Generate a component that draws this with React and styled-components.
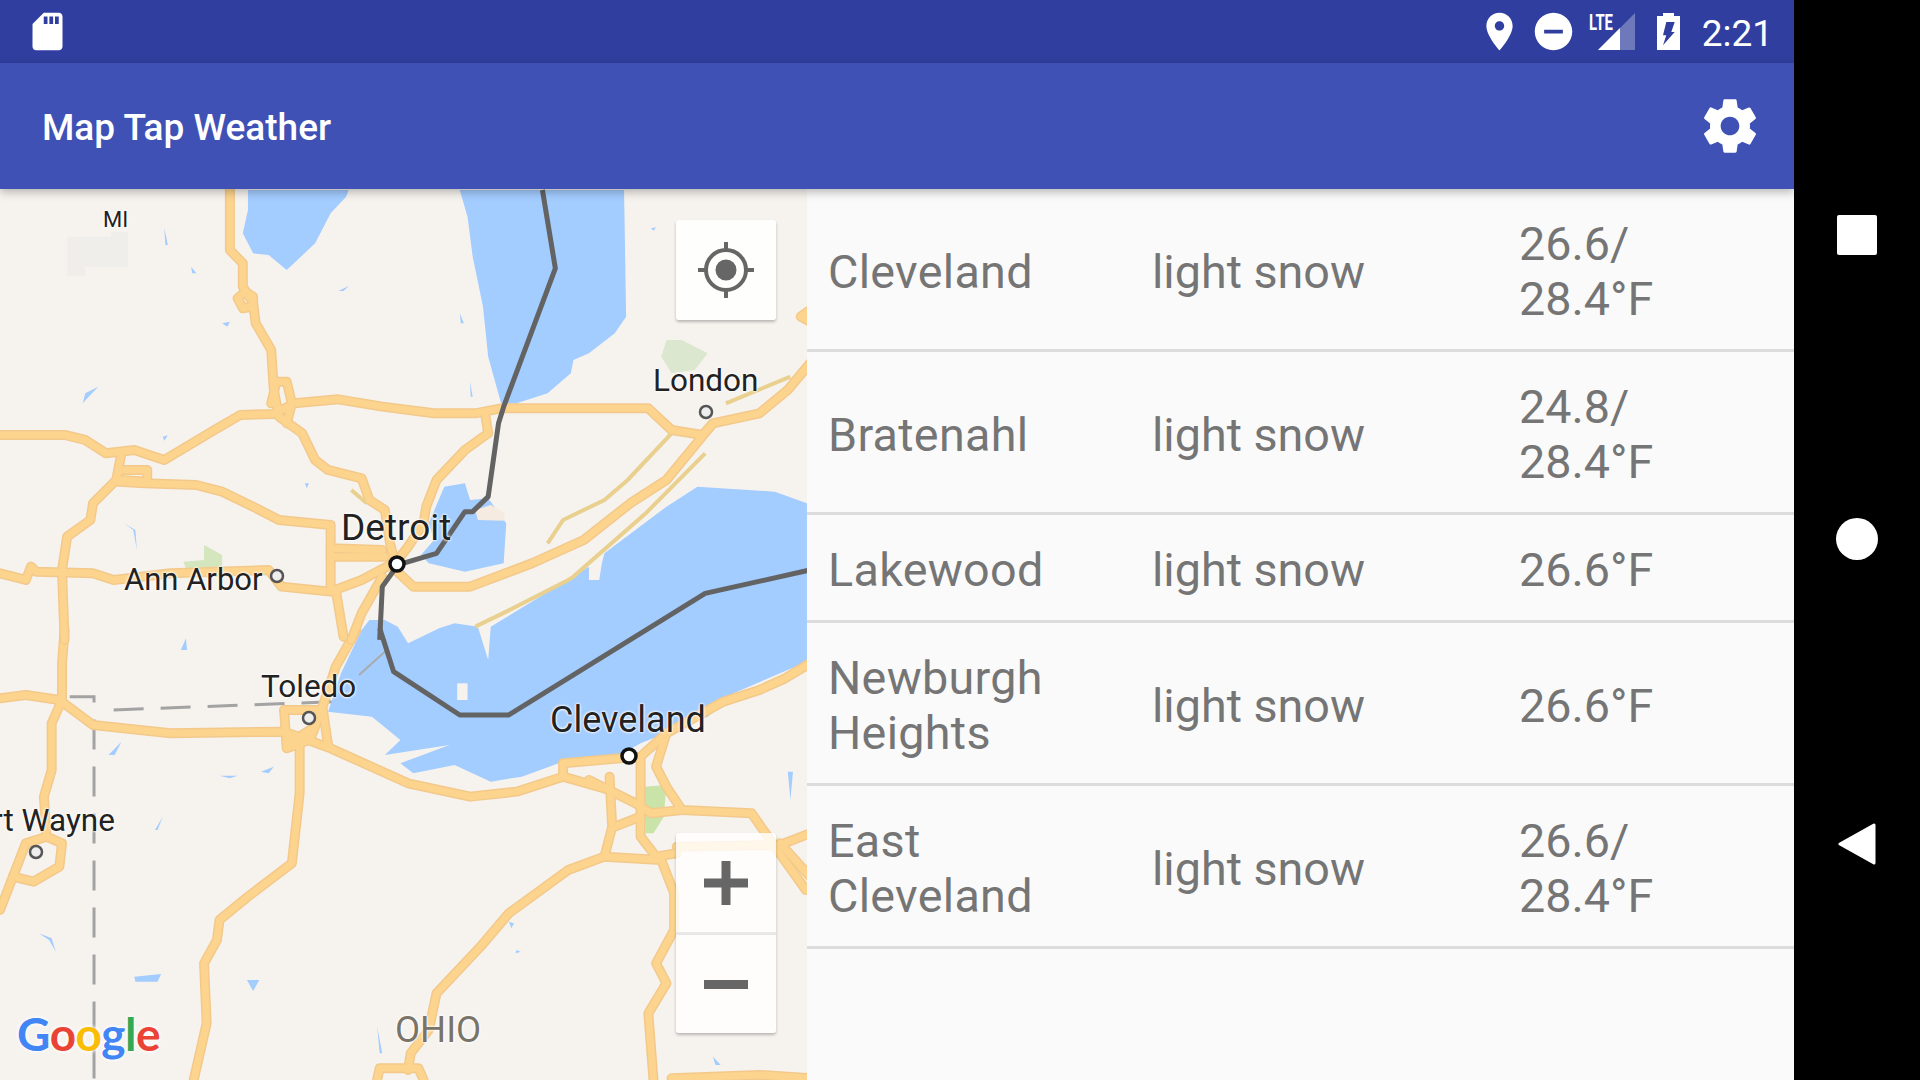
import React from 'react';
import styled, { createGlobalStyle } from 'styled-components';

const GlobalStyle = createGlobalStyle`
  html, body {
    margin: 0;
    padding: 0;
    background: #000;
    overflow: hidden;
  }
  body {
    font-family: Roboto, "Liberation Sans", sans-serif;
  }
`;

// map data, in the coordinates of the two halves of the map (top, bottom)
const TOP_TRANSFORM = 'translate(0 190) scale(.5166 .3333)';
const BOTTOM_TRANSFORM = 'translate(0 630) scale(.5166 .3333)';

const TOP_WATER = [
  'M480,0 L675,0 670,20 640,70 610,160 555,240 520,195 490,190 470,130 480,60Z',
  'M890,0 L1208,0 1212,380 1190,430 1140,490 1110,510 1105,550 1060,610 1000,640 970,640 945,500 935,350 915,200 905,80Z',
  'M860,890 L900,880 910,930 945,925 980,1000 975,1120 900,1145 830,1120 815,1095 840,1050 830,1000Z',
  'M430,400 445,395 440,410Z',
  'M655,303 675,288 665,303Z',
  'M160,640 190,590 165,610Z',
  'M318,115 325,165 320,165Z',
  'M370,230 380,250 372,250Z',
  'M1260,115 1270,112 1265,122Z',
  'M890,370 898,400 892,400Z',
  'M910,575 915,620 911,620Z',
  'M590,880 598,880 594,895Z',
  'M240,1000 262,1020 265,1080 258,1020Z',
  'M315,740 325,736 318,752Z',
];

const BOTTOM_WATER = [
  'M1562,-380 L1500,-415 1350,-430 1290,-370 1170,-230 1165,-200 1160,-150 1140,-150 1140,-190 950,-10 945,90 925,-10 880,-20 850,-5 790,40 770,-10 745,-30 715,-30 700,0 660,130 635,245 720,260 775,330 745,375 870,345 775,400 800,430 880,405 950,455 1010,440 1090,395 1200,375 1240,340 1370,260 1420,190 1562,95Z',
  'M210,375 235,335 222,375Z',
  'M260,1040 312,1032 305,1055 262,1055Z',
  'M478,1050 502,1050 490,1083Z',
  'M425,437 460,437 445,445Z',
  'M350,60 360,25 362,60Z',
  'M300,600 315,560 305,600Z',
  'M1525,425 1535,425 1530,510Z',
  'M985,875 995,880 990,895Z',
  'M1000,960 1008,965 998,970Z',
  'M75,910 100,925 108,965 95,930Z',
  'M505,425 530,410 520,430Z',
  'M1380,1280 1395,1305 1385,1305Z',
  'M730,1190 740,1270 735,1270Z',
];

const TOP_ROADS = [
  'M445,0 L445,180 470,220 470,290 490,340 495,400 525,480 530,600 540,680 585,730 610,810 635,840 700,865 715,930 745,960 755,1060 765,1120',
  'M475,305 L460,325 470,355 490,350 490,320 475,305',
  'M0,735 L125,735 165,750 205,790 260,780 318,810 415,720 465,675 530,672 570,640 655,628 740,650 840,670 920,670 970,655 1255,655 1300,720 1360,735 1380,700 1470,670 1525,600 1568,520',
  'M525,640 L535,575 555,575 565,640 555,700',
  'M940,680 L945,730 900,780 845,870 825,950 820,1000 790,1070 765,1120',
  'M235,790 L225,870 180,940 175,990 130,1040 120,1140 125,1350',
  'M230,875 L280,880 380,885 430,905 490,950 540,990 640,1005 640,1190',
  'M235,840 L285,840 285,875 235,870',
  'M640,1075 L740,1080',
  'M640,1100 L745,1100',
  'M0,1150 L50,1170 60,1130 70,1145 180,1150 220,1170 330,1150 520,1140 545,1190 640,1205 700,1170 755,1125 800,1190 910,1190 1030,1120 1130,1050 1220,940 1290,870 1375,710',
  'M650,1200 L665,1340',
  'M740,1160 L700,1270 680,1350',
  'M1568,360 L1550,380 1568,395',
];

const BOTTOM_ROADS = [
  'M125,0 L120,100 120,210 100,280 100,420 85,500 90,620',
  'M90,620 L50,640 25,740 65,755 115,710 120,640 90,620',
  'M25,740 L0,840',
  'M0,205 L50,195 115,210 180,285 330,310 550,305 640,355 790,460 910,500 1000,485 1090,440',
  'M550,240 L625,240 635,345',
  'M550,240 L555,355 590,335',
  'M600,300 L560,340',
  'M690,0 L650,110 620,250 600,330',
  'M580,340 L580,490 565,700 480,800 425,870 420,930 395,1000 400,1180 375,1350',
  'M1090,440 L1090,400 1200,385 1240,380 1290,310 1400,215 1470,180 1520,145 1568,100',
  'M1090,440 L1180,480',
  'M1290,310 L1270,410 1290,470 1320,540 1455,550 1500,650 1560,780',
  'M1180,440 L1185,590 1170,680',
  'M1240,390 L1240,620 1270,680 1310,670',
  'M1140,450 L1230,520 1260,550 1320,540',
  'M1190,590 L1240,560',
  'M1170,680 L1100,720 985,850 930,950 845,1090 830,1200 795,1270 790,1320',
  'M1170,680 L1280,690 1305,790 1305,900 1270,1000 1290,1060 1255,1150 1265,1350',
  'M730,1350 L735,1315 810,1315 820,1350',
  'M1310,650 L1510,645 1568,610',
  'M1510,640 L1568,740',
  'M1300,1345 L1470,1335 1568,1345',
];

const TOP_MINOR = [
  'M1300,730 L1215,870 1170,930 1090,990 1060,1060',
  'M1365,790 L1250,970 1110,1160 1100,1170 980,1265 920,1310',
  'M1405,640 L1530,560',
  'M680,900 L710,940',
];

const LABELS = [
  { text: 'MI', x: 103, y: 20, size: 22 },
  { text: 'London', x: 653, y: 176, size: 31.5 },
  { text: 'Detroit', x: 341, y: 320, size: 37 },
  { text: 'Ann Arbor', x: 124, y: 375, size: 31 },
  { text: 'Toledo', x: 261, y: 482, size: 31.5 },
  { text: 'Cleveland', x: 550, y: 513, size: 36 },
  { text: 'Fort Wayne', x: -43, y: 616, size: 31.5 },
  { text: 'OHIO', x: 395, y: 823, size: 36.5, region: true },
];

const CITIES = [
  { name: 'Cleveland', description: 'light snow', temp: ['26.6/', '28.4°F'] },
  { name: 'Bratenahl', description: 'light snow', temp: ['24.8/', '28.4°F'] },
  { name: 'Lakewood', description: 'light snow', temp: ['26.6°F'], short: true },
  { name: 'Newburgh Heights', description: 'light snow', temp: ['26.6°F'] },
  { name: 'East Cleveland', description: 'light snow', temp: ['26.6/', '28.4°F'] },
];

const MapDrawing = () => (
  <MapSvg viewBox="0 189 807 891">
    <g transform={TOP_TRANSFORM}>
      {TOP_WATER.map((d) => <Water key={d} d={d} />)}
      <path d="M130,140 L215,140 215,125 248,125 248,230 165,230 165,258 130,258Z" fill="#f0eeeb" />
      <path d="M1290,450 L1320,450 1370,490 1345,540 1300,550 1280,500Z" fill="#dbe8cf" />
      <path d="M355,1115 L395,1110 395,1065 430,1095 430,1135 360,1135Z" fill="#d3e6bd" />
      <path d="M920,960 L950,945 978,970 975,992 925,990Z" fill="#f6ebe0" />
    </g>
    <g transform={BOTTOM_TRANSFORM}>
      {BOTTOM_WATER.map((d) => <Water key={d} d={d} />)}
      <path d="M885,160 L905,160 905,210 885,210Z" fill="#f6f3ef" />
      <path d="M1245,470 L1290,465 1285,560 1265,610 1250,610Z" fill="#c9e3a8" />
      <Border d="M135,200 L182,200 182,1350" />
      <Border d="M220,240 L650,215" />
      <Faint d="M695,135 L745,65" />
      {BOTTOM_ROADS.map((d) => <RoadCasing key={d} d={d} />)}
      {BOTTOM_ROADS.map((d) => <RoadFill key={d} d={d} />)}
      <Route d="M735,-5 L762,125 890,255 985,255 1365,-110 1568,-180" />
    </g>
    <g transform={TOP_TRANSFORM}>
      {TOP_ROADS.map((d) => <RoadCasing key={d} d={d} />)}
      {TOP_MINOR.map((d) => <MinorRoad key={d} d={d} />)}
      {TOP_ROADS.map((d) => <RoadFill key={d} d={d} />)}
      <Route d="M1050,0 L1075,235 975,650 965,700 945,920 915,965 900,965 845,1090 770,1125 740,1190 735,1350" />
    </g>
    <Pin cx="277" cy="576" r="6" />
    <Pin cx="706" cy="412" r="6" />
    <Pin cx="309" cy="718" r="6" />
    <Pin cx="36" cy="852" r="6" />
    <MajorPin cx="397" cy="564" r="7" />
    <MajorPin cx="629" cy="756" r="7" />
  </MapSvg>
);

const App = () => {
  return (
    <Device>
      <GlobalStyle />
      <Screen>
        <StatusBar>
          <svg width="45" height="45" viewBox="0 0 24 24" fill="#fff">
            <path d="M18 2h-8L4.02 8 4 20c0 1.1.9 2 2 2h12c1.1 0 2-.9 2-2V4c0-1.1-.9-2-2-2zm-6 6h-2V4h2v4zm3 0h-2V4h2v4zm3 0h-2V4h2v4z" />
          </svg>
          <StatusIcons>
            <PlaceIcon width="45" height="45" viewBox="0 0 24 24" fill="#fff">
              <path d="M12 2C8.13 2 5 5.13 5 9c0 5.25 7 13 7 13s7-7.75 7-13c0-3.87-3.13-7-7-7zm0 9.5c-1.38 0-2.5-1.12-2.5-2.5s1.12-2.5 2.5-2.5 2.5 1.12 2.5 2.5-1.12 2.5-2.5 2.5z" />
            </PlaceIcon>
            <DndIcon width="45" height="45" viewBox="0 0 24 24" fill="#fff">
              <path d="M12 2C6.48 2 2 6.48 2 12s4.48 10 10 10 10-4.48 10-10S17.52 2 12 2zm5 11H7v-2h10v2z" />
            </DndIcon>
            <SignalIcon width="46" height="37" viewBox="0 0 46 37">
              <path d="M9 37 L46 0 V37Z" fill="#fff" fillOpacity=".3" />
              <path d="M9 37 L31 15 V37Z" fill="#fff" />
              <text x="0" y="17" fontFamily="Roboto, sans-serif" fontWeight="700" fontSize="22" fill="#fff" textLength="24" lengthAdjust="spacingAndGlyphs">LTE</text>
            </SignalIcon>
            <BatteryIcon width="23" height="37" viewBox="0 0 23 37">
              <path fill="#fff" fillRule="evenodd" d="M6 0h11v3h6v34H0V3h6zM9.3 9h8.4l-3.4 10h3.4L6 32.3l3.3-10H6z" />
            </BatteryIcon>
            <Clock>2:21</Clock>
          </StatusIcons>
        </StatusBar>
        <AppBar>
          <Title>Map Tap Weather</Title>
          <svg width="64" height="64" viewBox="0 0 24 24" fill="#fff">
            <path d="M19.43 12.98c.04-.32.07-.64.07-.98s-.03-.66-.07-.98l2.11-1.65c.19-.15.24-.42.12-.64l-2-3.46c-.12-.22-.39-.3-.61-.22l-2.49 1c-.52-.4-1.08-.73-1.69-.98l-.38-2.65C14.46 2.18 14.25 2 14 2h-4c-.25 0-.46.18-.49.42l-.38 2.65c-.61.25-1.17.59-1.69.98l-2.49-1c-.23-.09-.49 0-.61.22l-2 3.46c-.13.22-.07.49.12.64l2.11 1.65c-.04.32-.07.65-.07.98s.03.66.07.98l-2.11 1.65c-.19.15-.24.42-.12.64l2 3.46c.12.22.39.3.61.22l2.49-1c.52.4 1.08.73 1.69.98l.38 2.65c.03.24.24.42.49.42h4c.25 0 .46-.18.49-.42l.38-2.65c.61-.25 1.17-.59 1.69-.98l2.49 1c.23.09.49 0 .61-.22l2-3.46c.12-.22.07-.49-.12-.64l-2.11-1.65zM12 15.5c-1.93 0-3.5-1.57-3.5-3.5s1.57-3.5 3.5-3.5 3.5 1.57 3.5 3.5-1.57 3.5-3.5 3.5z" />
          </svg>
        </AppBar>
        <Body>
          <MapPane>
            <MapDrawing />
            {LABELS.map((label) => (
              <MapLabel key={label.text} $x={label.x} $y={label.y} $size={label.size} $region={label.region}>
                {label.text}
              </MapLabel>
            ))}
            <GoogleLogo>
              <GoogleLetter $color="#4285f4">G</GoogleLetter>
              <GoogleLetter $color="#ea4335">o</GoogleLetter>
              <GoogleLetter $color="#fbbc05">o</GoogleLetter>
              <GoogleLetter $color="#4285f4">g</GoogleLetter>
              <GoogleLetter $color="#34a853">l</GoogleLetter>
              <GoogleLetter $color="#ea4335">e</GoogleLetter>
            </GoogleLogo>
            <LocateButton>
              <svg width="56" height="56" viewBox="0 0 56 56" fill="none" stroke="#666">
                <circle cx="28" cy="28" r="20" strokeWidth="4" />
                <circle cx="28" cy="28" r="10.5" fill="#666" stroke="none" />
                <path d="M28 0v8M28 48v8M0 28h8M48 28h8" strokeWidth="4" />
              </svg>
            </LocateButton>
            <ZoomControls>
              <ZoomButton>
                <svg width="44" height="44" viewBox="0 0 44 44" fill="#666">
                  <path d="M17.5 0h9v17.5H44v9H26.5V44h-9V26.5H0v-9h17.5z" />
                </svg>
              </ZoomButton>
              <ZoomButton>
                <svg width="44" height="9" viewBox="0 0 44 9" fill="#666">
                  <rect width="44" height="9" />
                </svg>
              </ZoomButton>
            </ZoomControls>
          </MapPane>
          <CityList>
            {CITIES.map((city) => (
              <CityRow key={city.name} $short={city.short}>
                <CityName>{city.name}</CityName>
                <CityText>{city.description}</CityText>
                <CityText>
                  {city.temp.map((line) => <TempLine key={line}>{line}</TempLine>)}
                </CityText>
              </CityRow>
            ))}
          </CityList>
        </Body>
      </Screen>
      <NavBar>
        <NavSquare />
        <NavCircle />
        <svg width="38" height="42" viewBox="0 0 38 42" fill="#fff" stroke="#fff" strokeWidth="3" strokeLinejoin="round">
          <path d="M2 21 L36 2 V40Z" />
        </svg>
      </NavBar>
    </Device>
  );
};

const Device = styled.div`
  display: flex;
  width: 1920px;
  height: 1080px;
  overflow: hidden;
  background: #000;
`;
const Screen = styled.div`
  display: flex;
  flex-direction: column;
  width: 1794px;
  background: #fafafa;
`;
const StatusBar = styled.div`
  display: flex;
  align-items: center;
  justify-content: space-between;
  flex: 0 0 63px;
  padding: 0 21px 0 25px;
  box-sizing: border-box;
  background: #303f9f;
`;
const StatusIcons = styled.div`
  display: flex;
  align-items: center;
`;
const PlaceIcon = styled.svg`
  margin-right: 9px;
`;
const DndIcon = styled.svg`
  margin-right: 13px;
`;
const SignalIcon = styled.svg`
  margin-right: 22px;
  overflow: visible;
`;
const BatteryIcon = styled.svg`
  margin-right: 22px;
`;
const Clock = styled.span`
  padding-top: 3px;
  font-size: 37px;
  color: #fff;
`;
const AppBar = styled.div`
  position: relative;
  z-index: 2;
  display: flex;
  align-items: center;
  justify-content: space-between;
  flex: 0 0 126px;
  padding: 0 32px 0 42px;
  box-sizing: border-box;
  background: #3f51b5;
  box-shadow: 0 3px 9px rgba(0, 0, 0, 0.28);
`;
const Title = styled.h1`
  margin: 3px 0 0;
  font-size: 37px;
  font-weight: 500;
  color: #fff;
`;
const Body = styled.div`
  display: flex;
  flex: 1;
  min-height: 0;
`;
const MapPane = styled.div`
  position: relative;
  flex: 0 0 807px;
  overflow: hidden;
  background: #f6f3ef;
`;
const MapSvg = styled.svg`
  display: block;
  width: 807px;
  height: 891px;
`;
const Water = styled.path`
  fill: #a3ccff;
`;
const RoadCasing = styled.path`
  fill: none;
  stroke: #f3c98b;
  stroke-width: 10;
  stroke-linejoin: round;
  stroke-linecap: round;
  vector-effect: non-scaling-stroke;
`;
const RoadFill = styled.path`
  fill: none;
  stroke: #fdd48d;
  stroke-width: 7;
  stroke-linejoin: round;
  stroke-linecap: round;
  vector-effect: non-scaling-stroke;
`;
const MinorRoad = styled.path`
  fill: none;
  stroke: #ead08f;
  stroke-width: 4;
  vector-effect: non-scaling-stroke;
`;
const Route = styled.path`
  fill: none;
  stroke: #636363;
  stroke-width: 5;
  stroke-linejoin: round;
  vector-effect: non-scaling-stroke;
`;
const Border = styled.path`
  fill: none;
  stroke: #a3a3a3;
  stroke-width: 3;
  stroke-dasharray: 30 17;
  vector-effect: non-scaling-stroke;
`;
const Faint = styled.path`
  fill: none;
  stroke: #aaa;
  stroke-width: 2;
  vector-effect: non-scaling-stroke;
`;
const Pin = styled.circle`
  fill: #eee;
  stroke: #555;
  stroke-width: 2.5;
`;
const MajorPin = styled.circle`
  fill: #fff;
  stroke: #111;
  stroke-width: 3.5;
`;
const MapLabel = styled.span`
  position: absolute;
  left: ${(p) => p.$x}px;
  top: ${(p) => p.$y}px;
  font-size: ${(p) => p.$size}px;
  line-height: ${(p) => p.$size}px;
  white-space: nowrap;
  color: ${(p) => (p.$region ? '#7a7368' : '#222')};
  text-shadow: 0 0 3px rgba(255, 255, 255, 0.9), 0 0 3px rgba(255, 255, 255, 0.9), 0 0 2px #fff;
`;
const GoogleLogo = styled.div`
  position: absolute;
  left: 17px;
  top: 818px;
  font-family: Lato, Roboto, sans-serif;
  font-size: 46px;
  line-height: 54px;
  font-weight: 700;
  letter-spacing: -0.5px;
  text-shadow: 0 0 4px rgba(255, 255, 255, 0.9), 0 0 4px rgba(255, 255, 255, 0.9);
`;
const GoogleLetter = styled.span`
  color: ${(p) => p.$color};
`;
const LocateButton = styled.div`
  position: absolute;
  left: 676px;
  top: 31px;
  display: flex;
  align-items: center;
  justify-content: center;
  width: 100px;
  height: 100px;
  border-radius: 3px;
  background: rgba(255, 255, 255, 0.87);
  box-shadow: 0 2px 3px rgba(0, 0, 0, 0.25);
`;
const ZoomControls = styled.div`
  position: absolute;
  left: 676px;
  top: 644px;
  display: flex;
  flex-direction: column;
  width: 100px;
  border-radius: 3px;
  background: rgba(255, 255, 255, 0.82);
  box-shadow: 0 2px 3px rgba(0, 0, 0, 0.25);
`;
const ZoomButton = styled.div`
  display: flex;
  align-items: center;
  justify-content: center;
  height: 99px;
  & + & {
    height: 98px;
    border-top: 3px solid rgba(232, 230, 228, 0.9);
  }
`;
const CityList = styled.div`
  flex: 1;
  background: #fafafa;
`;
const CityRow = styled.div`
  display: grid;
  grid-template-columns: 324px 367px 1fr;
  align-items: center;
  box-sizing: border-box;
  min-height: ${(p) => (p.$short ? 108 : 163)}px;
  padding: 6px 0 0 21px;
  border-bottom: 3px solid #dcdcdc;
  font-size: 46.7px;
  line-height: 55px;
  color: #757575;
`;
const CityName = styled.div`
  padding-right: 40px;
  letter-spacing: 0.3px;
`;
const CityText = styled.div``;
const TempLine = styled.div``;
const NavBar = styled.div`
  display: flex;
  flex-direction: column;
  align-items: center;
  justify-content: center;
  gap: 263px;
  flex: 0 0 126px;
`;
const NavSquare = styled.div`
  width: 40px;
  height: 40px;
  border-radius: 2px;
  background: #fff;
`;
const NavCircle = styled.div`
  width: 42px;
  height: 42px;
  border-radius: 50%;
  background: #fff;
`;

export default App;
